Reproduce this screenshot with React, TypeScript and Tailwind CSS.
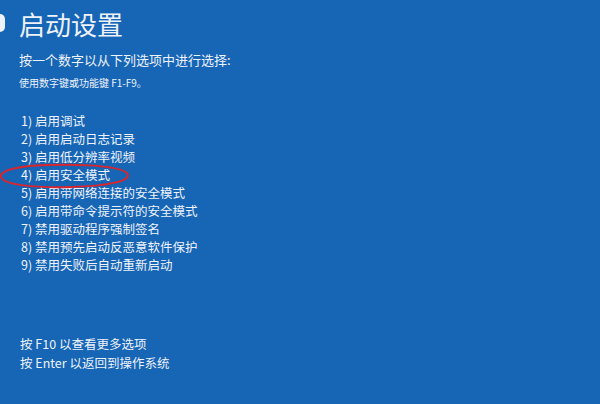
import React from 'react';

const OPTIONS = [
  '1) 启用调试',
  '2) 启用启动日志记录',
  '3) 启用低分辨率视频',
  '4) 启用安全模式',
  '5) 启用带网络连接的安全模式',
  '6) 启用带命令提示符的安全模式',
  '7) 禁用驱动程序强制签名',
  '8) 禁用预先启动反恶意软件保护',
  '9) 禁用失败后自动重新启动',
];

export default function App() {
  return (
    <div
      className="relative h-[404px] w-[600px] overflow-hidden bg-[#1765b5] text-[#eef3fa]"
      style={{ fontFamily: '"Noto Sans CJK SC", "Noto Sans", sans-serif' }}
    >
      {/* back button, cut off at the edge */}
      <div className="absolute left-[-12px] top-[14px] h-[18px] w-[17px] rounded-[5px] bg-[#eef3fa]" />

      <div className="flex flex-col pl-[19px]">
        <h1 className="mt-[8px] text-[26px] leading-[32px] font-normal">启动设置</h1>
        <p className="mt-[11px] text-[13px] leading-[18px]">按一个数字以从下列选项中进行选择:</p>
        <p className="mt-[7px] text-[10px] leading-[14px]">使用数字键或功能键 F1-F9。</p>

        <ul className="mt-[22px] flex flex-col pl-[2px] text-[12.5px] leading-[18px]">
          {OPTIONS.map((o) => (
            <li key={o}>{o}</li>
          ))}
        </ul>

        <div className="mt-[60px] flex flex-col pl-[1px] text-[12.5px] leading-[19px]">
          <p>按 F10 以查看更多选项</p>
          <p>按 Enter 以返回到操作系统</p>
        </div>
      </div>

      {/* hand-drawn red circle around option 4 */}
      <svg className="absolute left-0 top-[162px]" width="140" height="28" viewBox="0 0 140 28">
        <path
          d="M28 4 C70 1 118 3 127 11 C133 19 108 24 70 25 C35 26 4 23 1 15 C-1 8 20 4 45 3"
          fill="none"
          stroke="#d8262f"
          strokeWidth="2"
          strokeLinecap="round"
        />
      </svg>
    </div>
  );
}
